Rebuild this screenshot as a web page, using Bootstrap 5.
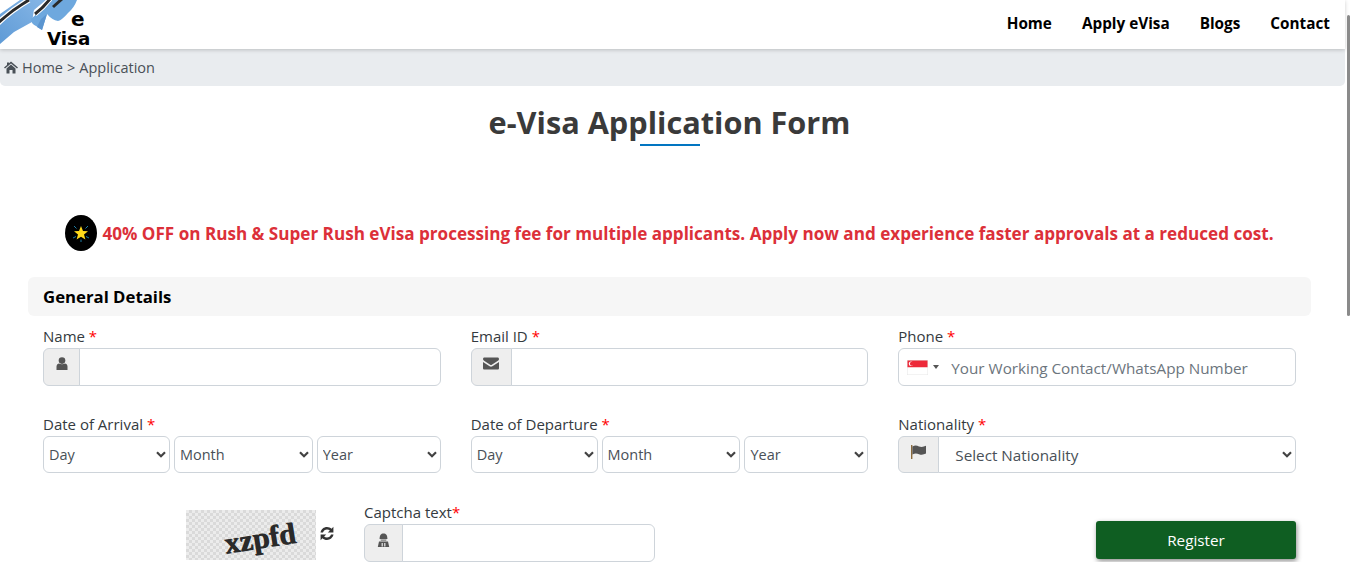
<!DOCTYPE html>
<html lang="en">
<head>
    <meta charset="UTF-8">
    <meta name="viewport" content="width=device-width, initial-scale=1.0">
    <title>e-Visa Application Form</title>
    <link rel="stylesheet" href="https://cdn.jsdelivr.net/npm/bootstrap@5.3.0/dist/css/bootstrap.min.css">
    <script src="https://cdn.jsdelivr.net/npm/bootstrap@5.3.0/dist/js/bootstrap.bundle.min.js"></script>
    <style>
        html { overflow: hidden; }
        body {
            font-family: "Open Sans", "Noto Sans", sans-serif;
            font-size: 15px;
            color: #343a40;
            background: #fff;
        }
        .page-wrap { width: 1345px; }
        .site-header {
            height: 49px;
            background: #fff;
            box-shadow: 0 1px 4px rgba(0,0,0,.2);
            position: relative;
        }
        .logo-box { width: 100px; height: 49px; overflow: hidden; position: relative; }
        .logo-e, .logo-visa {
            position: absolute;
            font-family: "DejaVu Sans", sans-serif;
            font-weight: 700;
            color: #000;
            line-height: 1;
        }
        .logo-e { left: 71px; top: 9px; font-size: 20px; }
        .logo-visa { left: 47px; top: 30px; font-size: 18.3px; }
        .top-link { font-weight: 700; font-size: 15.3px; color: #000; text-decoration: none; }
        .top-links { gap: 30px; padding-right: 15px; padding-bottom: 3px; }
        .crumb-bar {
            height: 37px;
            background: #e9ecef;
            border-radius: 0 0 5px 5px;
            padding-left: 4px;
            color: #495057;
            font-size: 14.5px;
        }
        .form-area { padding: 0 34px 0 28px; }
        .page-title {
            font-size: 30.7px;
            font-weight: 700;
            color: #3a3a3a;
            text-align: center;
            margin: 0;
            padding-top: 15px;
            line-height: 43px;
        }
        .title-rule { width: 60px; height: 2px; background: #0275c1; margin: 0 auto; }
        .promo-line {
            margin-top: 69px;
            height: 36px;
            color: #dc3039;
            font-weight: 700;
            font-size: 17.1px;
            gap: 5px;
        }
        .promo-text { padding-top: 2px; }
        .star-dot {
            width: 32px; height: 36px;
            background: #000;
            border-radius: 50%;
        }
        .section-bar {
            margin-top: 26px;
            height: 39px;
            background: #f6f6f6;
            border-radius: 6px;
            padding-left: 15px;
            font-size: 16.75px;
            font-weight: 700;
            color: #000;
        }
        .field-row { --bs-gutter-x: 30px; margin: 8px 0 0; }
        .field-label { display: block; line-height: 24px; color: #343a40; margin: 0; }
        .req { color: #f00; }
        .form-control, .form-select { font-size: 15.25px; color: #495057; border-color: #ced4da; }
        .form-select {
            background-image: url("data:image/svg+xml,%3csvg xmlns='http://www.w3.org/2000/svg' viewBox='0 0 10 7'%3e%3cpath fill='none' stroke='%23444' stroke-width='2.2' d='M1 1.2l4 4 4-4'/%3e%3c/svg%3e");
            background-size: 10px 7px;
        }
        .input-group-text { background: #eee; border-color: #ced4da; justify-content: center; align-items: flex-start; padding-top: 8px; }
        .field-row .form-control { height: 38px; }
        .addon-name { width: 37px; padding-left: 0; padding-right: 0; }
        .addon-mail { width: 41px; padding-left: 0; padding-right: 0; }
        .addon-flag { width: 41px; padding-left: 0; padding-right: 0; }
        .addon-spy { width: 39px; padding-left: 0; padding-right: 0; }
        .phone-box {
            height: 38px;
            border: 1px solid #ced4da;
            border-radius: 6px;
            padding-left: 8px;
        }
        .phone-box input { border: 0; outline: 0; flex: 1; min-width: 0; padding: 2px 0 0 12px; font-size: 15.25px; color: #495057; background: transparent; }
        .phone-box input::placeholder { color: #6c757d; opacity: 1; }
        .caret-down { width: 0; height: 0; border: 3px solid transparent; border-top: 4px solid #555; border-bottom: 0; margin-left: 5px; }
        .date-grid { display: grid; grid-template-columns: 127fr 139fr 124fr; gap: 4px; }
        .date-grid .form-select { height: 37px; font-size: 14.5px; padding: 1px 20px 0 5px; background-position: right 3px center; }
        .nat-select { height: 37px; padding-left: 16px; padding-top: 2px; padding-bottom: 0; background-position: right 3px center; }
        .row-two { margin-top: 26px; }
        .row-three { margin-top: 27px; }
        .captcha-side { padding-left: 158px; gap: 4px; }
        .captcha-pic {
            width: 130px; height: 50px;
            background-color: #e4e4e4;
            background-image: conic-gradient(#dadada 25%, #ececec 0 50%, #dadada 0 75%, #ececec 0);
            background-size: 6px 6px;
            padding: 13px 0 0 38px;
            overflow: hidden;
            margin-top: 10px;
        }
        .captcha-word {
            display: inline-block;
            font-family: "Liberation Serif", serif;
            font-weight: 700;
            font-size: 30px;
            line-height: 1;
            color: #2a2a2a;
            text-shadow: .6px .6px 0 #2a2a2a;
            transform: rotate(-9deg);
        }
        .refresh-wrap { margin-top: 26px; width: 40px; }
        .captcha-entry { width: 291px; }
        .register-btn {
            width: 200px; height: 38px;
            background: #0f5e22;
            color: #fff;
            border: 0;
            border-radius: 3px;
            font-size: 15.25px;
            box-shadow: 1px 2px 5px rgba(0,0,0,.45);
            margin-top: 21px;
        }
        .fake-scroll {
            position: fixed;
            top: 15px; right: 0;
            width: 3px; height: 301px;
            background: #8a8a8a;
            border-radius: 2px;
        }
    </style>
</head>
<body>
    <div class="page-wrap">
        <header class="site-header d-flex justify-content-between align-items-center">
            <div class="logo-box">
                <svg width="80" height="49" viewBox="0 0 80 49">
                    <defs>
                        <linearGradient id="ribbonBlue" x1="0" y1="1" x2="1" y2="0">
                            <stop offset="0" stop-color="#5f9bd6"/>
                            <stop offset="1" stop-color="#86b6e6"/>
                        </linearGradient>
                    </defs>
                    <path d="M0 14 L20 0 H46 L34 10 L32 22 L14 32 L0 44Z" fill="url(#ribbonBlue)"/>
                    <path d="M-2 23 Q12 10 29 0" fill="none" stroke="#fff" stroke-width="5.5"/>
                    <path d="M-2 23 Q12 10 29 0" fill="none" stroke="#2a2a2a" stroke-width="3"/>
                    <path d="M31 19 L52 0 H77 Q74 8 68 13 Q62 20 58 21 Q52 20 47 14 L42 30 L36 26 Q31 24 31 19Z" fill="#6ea8de"/>
                    <path d="M47 14 L42 30 L37 27 L41 19Z" fill="#5b95d0"/>
                    <path d="M35 14 Q43 8 50 -1" fill="none" stroke="#fff" stroke-width="5"/>
                    <path d="M35 14 Q43 8 50 -1" fill="none" stroke="#2a2a2a" stroke-width="3"/>
                    <path d="M53 7 L62 -1" fill="none" stroke="#2a2a2a" stroke-width="3"/>
                </svg>
                <span class="logo-e">e</span>
                <span class="logo-visa">Visa</span>
            </div>
            <nav class="top-links d-flex">
                <a class="top-link" href="#">Home</a>
                <a class="top-link" href="#">Apply eVisa</a>
                <a class="top-link" href="#">Blogs</a>
                <a class="top-link" href="#">Contact</a>
            </nav>
        </header>

        <div class="crumb-bar d-flex align-items-center gap-1">
            <svg width="14" height="13" viewBox="0 0 14 12"><path d="M7 0 L14 6 L13 7 L7 2 L1 7 L0 6 L3 3.4 V1 H5 V1.7Z M2.5 7 L7 3 L11.5 7 V12 H8.5 V8.5 H5.5 V12 H2.5Z" fill="#495057"/></svg>
            <span>Home</span><span>&gt;</span><span>Application</span>
        </div>

        <div class="form-area">
            <h1 class="page-title">e-Visa Application Form</h1>
            <div class="title-rule"></div>

            <div class="promo-line d-flex align-items-center justify-content-center">
                <span class="star-dot d-flex align-items-center justify-content-center">
                    <svg width="20" height="20" viewBox="0 0 20 20">
                        <path d="M3 3 L5.5 5.5 M17 3 L14.5 5.5 M2 15 L5 13.5 M18 15 L15 13.5 M10 19 V16.5" stroke="#1c7fa8" stroke-width="1"/>
                        <path d="M10 3 L12 8 L17 8.3 L13 11.5 L14.4 16.6 L10 13.7 L5.6 16.6 L7 11.5 L3 8.3 L8 8Z" fill="#ffd91a"/>
                    </svg>
                </span>
                <span class="promo-text">40% OFF on Rush &amp; Super Rush eVisa processing fee for multiple applicants. Apply now and experience faster approvals at a reduced cost.</span>
            </div>

            <div class="section-bar d-flex align-items-center">General Details</div>

            <div class="row field-row">
                <div class="col-4">
                    <label class="field-label">Name <span class="req">*</span></label>
                    <div class="input-group">
                        <span class="input-group-text addon-name">
                            <svg width="12" height="14" viewBox="0 0 12 14"><circle cx="6" cy="3.6" r="3.3" fill="#555"/><path d="M0.5 13 V9.5 C0.5 7.5 2 6.5 3 6.5 C4.5 7.6 7.5 7.6 9 6.5 C10 6.5 11.5 7.5 11.5 9.5 V13 Z" fill="#555"/></svg>
                        </span>
                        <input type="text" class="form-control">
                    </div>
                </div>
                <div class="col-4">
                    <label class="field-label">Email ID <span class="req">*</span></label>
                    <div class="input-group">
                        <span class="input-group-text addon-mail">
                            <svg width="16" height="13" viewBox="0 0 16 13"><path d="M1.4 0.5 H14.6 C15.4 0.5 16 1.1 16 2 C16 2.8 15.5 3.4 14.9 3.8 L8.8 7.8 C8.3 8.1 7.7 8.1 7.2 7.8 L1.1 3.8 C0.5 3.4 0 2.8 0 2 C0 1.1 0.6 0.5 1.4 0.5Z M0 5 L6.6 9.2 C7.5 9.8 8.5 9.8 9.4 9.2 L16 5 V11.3 C16 12 15.4 12.6 14.6 12.6 H1.4 C0.6 12.6 0 12 0 11.3Z" fill="#555"/></svg>
                        </span>
                        <input type="email" class="form-control">
                    </div>
                </div>
                <div class="col-4">
                    <label class="field-label">Phone <span class="req">*</span></label>
                    <div class="phone-box d-flex align-items-center">
                        <svg width="21" height="15" viewBox="0 0 21 15"><rect width="21" height="7.5" fill="#ed2939"/><rect y="7.5" width="21" height="7.5" fill="#fff"/><rect x=".25" y=".25" width="20.5" height="14.5" fill="none" stroke="#e6e6e6" stroke-width=".5"/><circle cx="4" cy="3.7" r="2.2" fill="#fff"/><circle cx="4.9" cy="3.7" r="2" fill="#ed2939"/></svg>
                        <span class="caret-down"></span>
                        <input type="tel" placeholder="Your Working Contact/WhatsApp Number">
                    </div>
                </div>
            </div>

            <div class="row field-row row-two">
                <div class="col-4">
                    <label class="field-label">Date of Arrival <span class="req">*</span></label>
                    <div class="date-grid">
                        <select class="form-select"><option>Day</option></select>
                        <select class="form-select"><option>Month</option></select>
                        <select class="form-select"><option>Year</option></select>
                    </div>
                </div>
                <div class="col-4">
                    <label class="field-label">Date of Departure <span class="req">*</span></label>
                    <div class="date-grid">
                        <select class="form-select"><option>Day</option></select>
                        <select class="form-select"><option>Month</option></select>
                        <select class="form-select"><option>Year</option></select>
                    </div>
                </div>
                <div class="col-4">
                    <label class="field-label">Nationality <span class="req">*</span></label>
                    <div class="input-group">
                        <span class="input-group-text addon-flag">
                            <svg width="15" height="14" viewBox="0 0 15 14"><rect x="0" y="0" width="1.4" height="14" fill="#8a6a3c"/><path d="M1.4 1.5 C4 0 6 0.6 8 1.4 C10 2.2 12.5 2 15 0.8 V8.6 C12.5 10 10 10 8 9.2 C6 8.4 4 8.2 1.4 9.4Z" fill="#555"/></svg>
                        </span>
                        <select class="form-select nat-select"><option>Select Nationality</option></select>
                    </div>
                </div>
            </div>

            <div class="row field-row row-three">
                <div class="col-8 d-flex captcha-side">
                    <div class="captcha-pic"><span class="captcha-word">xzpfd</span></div>
                    <div class="refresh-wrap">
                        <svg class="d-block" width="14" height="15" viewBox="0 0 14 15"><path d="M13.4 0.8 V6.6 H7.8 L9.9 4.5 C9.1 3.8 8.1 3.5 7 3.5 C5.1 3.5 3.6 4.6 3 6.4 H0.5 C1.2 3.2 3.8 1 7 1 C8.8 1 10.4 1.7 11.6 2.8Z M0.6 14.2 V8.4 H6.2 L4.1 10.5 C4.9 11.2 5.9 11.5 7 11.5 C8.9 11.5 10.4 10.4 11 8.6 H13.5 C12.8 11.8 10.2 14 7 14 C5.2 14 3.6 13.3 2.4 12.2Z" fill="#333"/></svg>
                    </div>
                    <div class="captcha-entry">
                        <label class="field-label">Captcha text<span class="req">*</span></label>
                        <div class="input-group">
                            <span class="input-group-text addon-spy">
                                <svg width="13" height="14" viewBox="0 0 13 14"><path d="M2.6 6 C2.6 2 4 0.4 6.5 0.4 C9 0.4 10.4 2 10.4 6Z" fill="#555"/><path d="M3.5 6.2 H9.5 L9.2 8 H3.8Z" fill="#999"/><path d="M0.8 14 L2 8.6 H11 L12.2 14Z" fill="#555"/><path d="M4.5 10 H6 V13.5 H4.5Z M7 10 H8.5 V13.5 H7Z" fill="#ccc"/></svg>
                            </span>
                            <input type="text" class="form-control">
                        </div>
                    </div>
                </div>
                <div class="col-4 d-flex justify-content-end align-items-start">
                    <button class="btn register-btn">Register</button>
                </div>
            </div>
        </div>
    </div>
    <div class="fake-scroll"></div>
</body>
</html>
